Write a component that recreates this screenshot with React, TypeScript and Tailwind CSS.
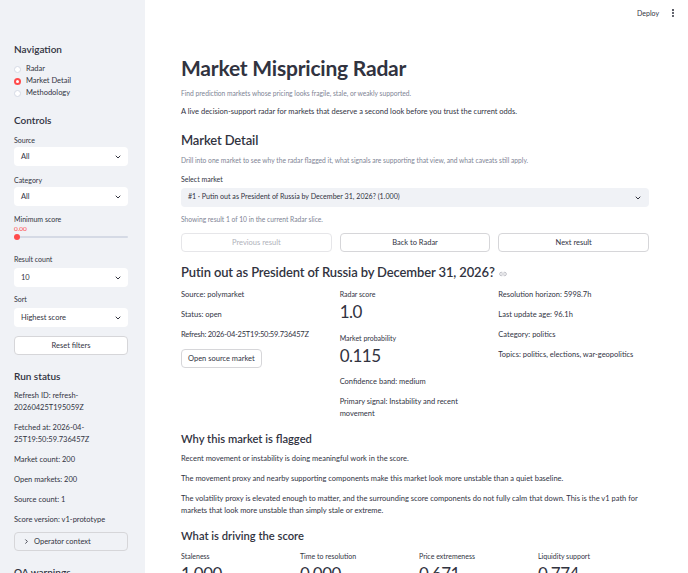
import { ChevronDown, ChevronRight, EllipsisVertical, Link2 } from "lucide-react";

function Label({ children, className = "" }: { children: React.ReactNode; className?: string }) {
  return <div className={`text-[7px] leading-[10px] text-[#31333f] ${className}`}>{children}</div>;
}

function SideSelect({ value, className = "" }: { value: string; className?: string }) {
  return (
    <div className={`flex h-[19px] items-center justify-between rounded-[4px] bg-white pl-[7px] pr-[6px] text-[7.5px] ${className}`}>
      <span>{value}</span>
      <ChevronDown className="h-[8px] w-[8px]" strokeWidth={3} />
    </div>
  );
}

function Radio({ label, checked }: { label: string; checked?: boolean }) {
  return (
    <div className="flex h-[12px] items-center gap-[5px] text-[7.5px]">
      {checked ? (
        <span className="flex h-[7px] w-[7px] items-center justify-center rounded-full bg-[#ff4b4b]">
          <span className="h-[3px] w-[3px] rounded-full bg-white" />
        </span>
      ) : (
        <span className="h-[7px] w-[7px] rounded-full border border-[#d5dae5] bg-white" />
      )}
      <span>{label}</span>
    </div>
  );
}

function Sidebar() {
  return (
    <aside className="w-[145px] shrink-0 bg-[#f0f2f6] pl-[14px] pr-[17px] pt-[42px]">
      <h2 className="text-[10px] font-semibold leading-[14px]">Navigation</h2>
      <div className="mt-[7px]">
        <Radio label="Radar" />
        <Radio label="Market Detail" checked />
        <Radio label="Methodology" />
      </div>

      <h2 className="mt-[14px] text-[10px] font-semibold leading-[14px]">Controls</h2>
      <Label className="mt-[8px]">Source</Label>
      <SideSelect value="All" className="mt-[2px]" />
      <Label className="mt-[9px]">Category</Label>
      <SideSelect value="All" className="mt-[2px]" />
      <Label className="mt-[8px]">Minimum score</Label>
      <div className="text-[6.5px] leading-[9px] text-[#ff4b4b]">0.00</div>
      <div className="relative flex h-[8px] items-center">
        <div className="h-[2px] w-full rounded-full bg-[#d5dae5]" />
        <span className="absolute left-[0px] h-[6px] w-[6px] rounded-full bg-[#ff4b4b]" />
      </div>
      <Label className="mt-[13px]">Result count</Label>
      <SideSelect value="10" className="mt-[4px]" />
      <Label className="mt-[7px]">Sort</Label>
      <SideSelect value="Highest score" className="mt-[4px]" />
      <button className="mt-[9px] flex h-[19px] w-full items-center justify-center rounded-[4px] border border-[#d6d6d9] bg-white text-[7.5px]">
        Reset filters
      </button>

      <h2 className="mt-[14px] text-[10px] font-semibold leading-[14px]">Run status</h2>
      <div className="mt-[7px] space-y-[8px] text-[7.5px] leading-[12px]">
        <p>
          Refresh ID: refresh-
          <br />
          20260425T195059Z
        </p>
        <p>
          Fetched at: 2026-04-
          <br />
          25T19:50:59.736457Z
        </p>
        <p>Market count: 200</p>
        <p>Open markets: 200</p>
        <p>Source count: 1</p>
        <p>Score version: v1-prototype</p>
      </div>
      <div className="mt-[6px] flex h-[19px] items-center gap-[4px] rounded-[4px] border border-[#d6d6d9] pl-[8px] text-[7.5px]">
        <ChevronRight className="h-[7px] w-[7px]" strokeWidth={3} />
        <span>Operator context</span>
      </div>
      <h2 className="mt-[14px] text-[10px] font-semibold leading-[14px]">QA warnings</h2>
    </aside>
  );
}

function Caption({ children, className = "" }: { children: React.ReactNode; className?: string }) {
  return <div className={`text-[6.7px] leading-[10px] text-[#808495] ${className}`}>{children}</div>;
}

function Metric({ label, value, className = "" }: { label: string; value: string; className?: string }) {
  return (
    <div className={className}>
      <Label>{label}</Label>
      <div className="mt-[2px] text-[17px] leading-[22px] tracking-[-0.03em]">{value}</div>
    </div>
  );
}

export default function App() {
  return (
    <div className="flex h-[573px] w-[688px] overflow-hidden bg-white font-['Lato',sans-serif] text-[#31333f]">
      <Sidebar />
      <main className="relative flex-1 pl-[36px] pr-[39px] pt-[55px]">
        <div className="absolute right-[10px] top-[8px] flex items-center gap-[9px] text-[7px]">
          <span>Deploy</span>
          <EllipsisVertical className="h-[10px] w-[10px]" strokeWidth={3} />
        </div>

        <h1 className="text-[21px] font-bold leading-[26px] tracking-[-0.01em]">Market Mispricing Radar</h1>
        <Caption className="mt-[7px]">Find prediction markets whose pricing looks fragile, stale, or weakly supported.</Caption>
        <p className="mt-[8px] text-[7.5px] leading-[12px]">
          A live decision-support radar for markets that deserve a second look before you trust the current odds.
        </p>

        <h2 className="mt-[13px] text-[13px] font-semibold leading-[18px] tracking-[-0.01em]">Market Detail</h2>
        <Caption className="mt-[6px]">
          Drill into one market to see why the radar flagged it, what signals are supporting that view, and what caveats still apply.
        </Caption>

        <Label className="mt-[9px]">Select market</Label>
        <div className="mt-[4px] flex h-[19px] items-center justify-between rounded-[4px] bg-[#f0f2f6] pl-[7px] pr-[7px] text-[7.1px]">
          <span>#1 · Putin out as President of Russia by December 31, 2026? (1.000)</span>
          <ChevronDown className="h-[8px] w-[8px]" strokeWidth={3} />
        </div>
        <Caption className="mt-[7px]">Showing result 1 of 10 in the current Radar slice.</Caption>

        <div className="mt-[9px] grid grid-cols-3 gap-[8px] text-[7.5px]">
          <button className="flex h-[19px] items-center justify-center rounded-[4px] border border-[#e6e6e9] text-[#b0b2ba]">
            Previous result
          </button>
          <button className="flex h-[19px] items-center justify-center rounded-[4px] border border-[#d6d6d9]">
            Back to Radar
          </button>
          <button className="flex h-[19px] items-center justify-center rounded-[4px] border border-[#d6d6d9]">
            Next result
          </button>
        </div>

        <h3 className="mt-[11px] flex items-center gap-[4px] text-[13px] font-semibold leading-[18px] tracking-[-0.01em]">
          <span>Putin out as President of Russia by December 31, 2026?</span>
          <Link2 className="mt-[3px] h-[8px] w-[8px] text-[#9a9ca6]" strokeWidth={2} />
        </h3>

        <div className="mt-[8px] grid grid-cols-3 gap-[8px] text-[7.5px] leading-[12px]">
          <div className="space-y-[8px]">
            <p>Source: polymarket</p>
            <p>Status: open</p>
            <p className="tracking-[-0.03em]">Refresh: 2026-04-25T19:50:59.736457Z</p>
            <button className="flex h-[19px] items-center rounded-[4px] border border-[#d6d6d9] px-[6px] text-[7.5px]">
              Open source market
            </button>
          </div>
          <div>
            <Metric label="Radar score" value="1.0" />
            <Metric label="Market probability" value="0.115" className="mt-[10px]" />
            <p className="mt-[9px]">Confidence band: medium</p>
            <p className="mt-[8px]">
              Primary signal: Instability and recent
              <br />
              movement
            </p>
          </div>
          <div className="space-y-[8px]">
            <p>Resolution horizon: 5998.7h</p>
            <p>Last update age: 96.1h</p>
            <p>Category: politics</p>
            <p>Topics: politics, elections, war-geopolitics</p>
          </div>
        </div>

        <h3 className="mt-[11px] text-[11.2px] font-semibold leading-[16px]">Why this market is flagged</h3>
        <div className="mt-[6px] space-y-[8px] text-[7.5px] leading-[12px]">
          <p>Recent movement or instability is doing meaningful work in the score.</p>
          <p>The movement proxy and nearby supporting components make this market look more unstable than a quiet baseline.</p>
          <p>
            The volatility proxy is elevated enough to matter, and the surrounding score components do not fully calm that down. This is the v1 path for markets that look more unstable than simply stale or extreme.
          </p>
        </div>

        <h3 className="mt-[11px] text-[11.2px] font-semibold leading-[16px]">What is driving the score</h3>
        <div className="mt-[7px] grid grid-cols-4 gap-[8px]">
          <Metric label="Staleness" value="1.000" />
          <Metric label="Time to resolution" value="0.000" />
          <Metric label="Price extremeness" value="0.671" />
          <Metric label="Liquidity support" value="0.774" />
        </div>
      </main>
    </div>
  );
}
